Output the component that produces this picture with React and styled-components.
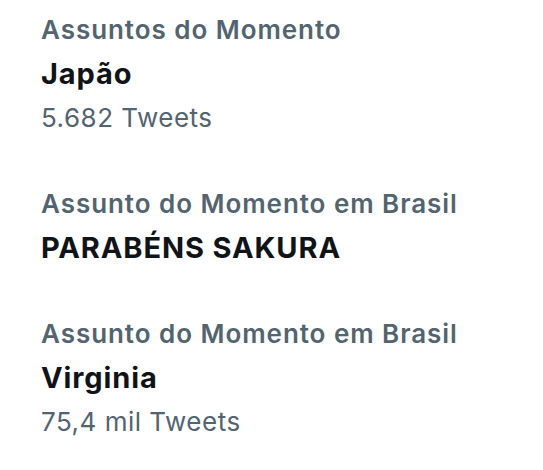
import React from 'react';
import styled, { createGlobalStyle } from 'styled-components';

// #536471 cinza das legendas
// #0f1419 preto dos títulos

const GlobalStyle = createGlobalStyle`
    body {
        margin: 0;
        background: #ffffff;
        font-family: Inter, 'Noto Sans', sans-serif;
        -webkit-font-smoothing: antialiased;
    }
`

const TrendList = styled.div`
    display: flex;
    flex-direction: column;
    gap: 42px;
    padding: 8px 0 0 41px;
    width: 543px;
    height: 470px;
    box-sizing: border-box;
`

const TrendItem = styled.div`
    display: flex;
    flex-direction: column;
`

const TrendCategory = styled.span`
    font-size: 26px;
    font-weight: 600;
    letter-spacing: 0.95px;
    line-height: 44px;
    color: #536471;
    white-space: nowrap;
`

const TrendName = styled.span`
    font-size: 29px;
    font-weight: 700;
    letter-spacing: 0.9px;
    line-height: 44px;
    color: #0f1419;
    white-space: nowrap;
`

const TrendCount = styled.span`
    font-size: 26px;
    font-weight: 400;
    letter-spacing: 0.5px;
    line-height: 44px;
    color: #536471;
    white-space: nowrap;
`

const trends = [
    { category: 'Assuntos do Momento', name: 'Japão', count: '5.682 Tweets' },
    { category: 'Assunto do Momento em Brasil', name: 'PARABÉNS SAKURA' },
    { category: 'Assunto do Momento em Brasil', name: 'Virginia', count: '75,4 mil Tweets' },
];

const App = () => (
    <>
        <GlobalStyle />
        <TrendList>
            {trends.map((t, i) => (
                <TrendItem key={i}>
                    <TrendCategory>{t.category}</TrendCategory>
                    <TrendName>{t.name}</TrendName>
                    {t.count && <TrendCount>{t.count}</TrendCount>}
                </TrendItem>
            ))}
        </TrendList>
    </>
);

export default App;
